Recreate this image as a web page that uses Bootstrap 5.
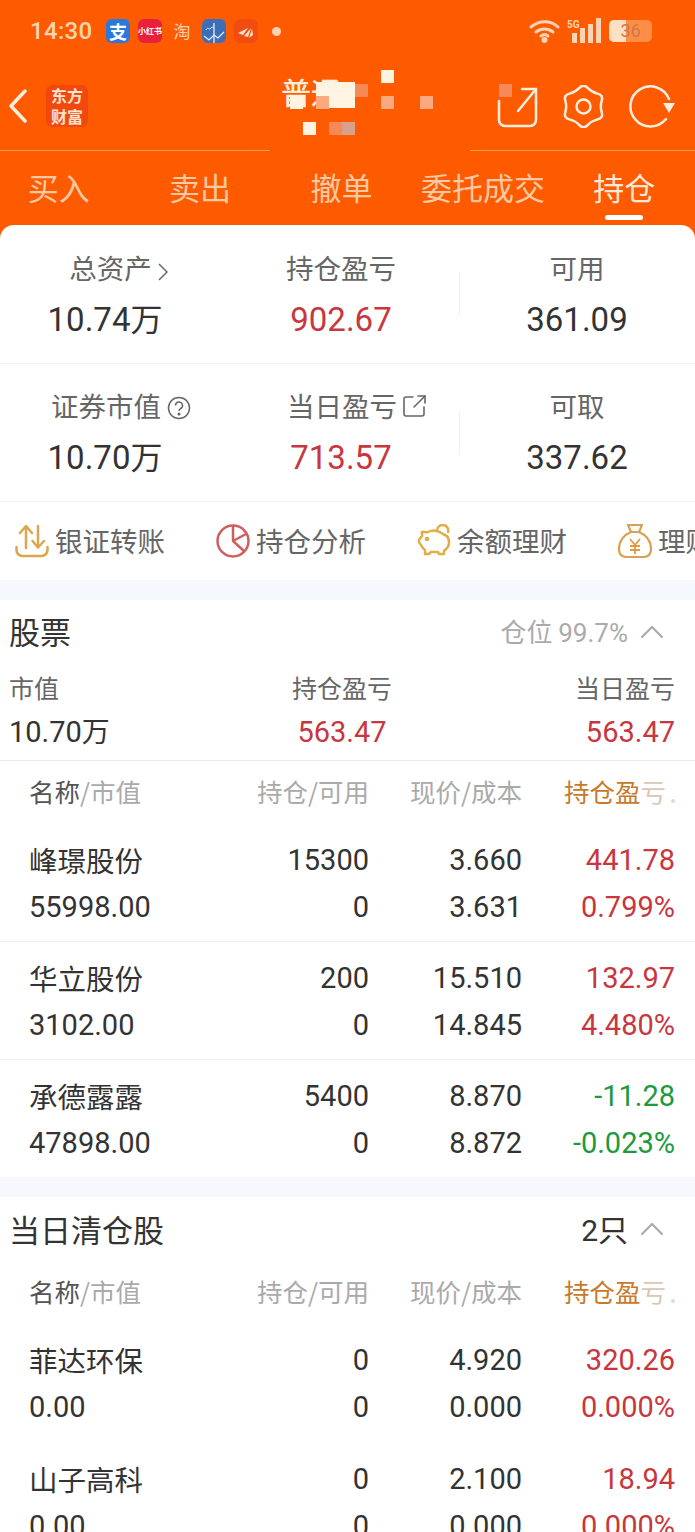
<!DOCTYPE html>
<html lang="zh-CN">
<head>
  <meta charset="UTF-8">
  <meta name="viewport" content="width=device-width, initial-scale=1.0">
  <title>持仓</title>
  <link href="https://cdn.jsdelivr.net/npm/bootstrap@5.3.0/dist/css/bootstrap.min.css" rel="stylesheet">
  <style>
    html, body { height: 1532px; overflow: hidden; }
    body { font-family: Roboto, "Noto Sans CJK SC", sans-serif; background: #fff; color: #333; }
    .cn { font-family: "Noto Sans CJK SC", sans-serif; }
    .rb { font-family: Roboto, sans-serif; }
    .top-area { background: #fe5b00; height: 240px; position: relative; }
    .status-bar { height: 62px; padding: 0 0 0 30px; color: #fcd4b4; }
    .clock { font-size: 24px; font-weight: 500; width: 76px; letter-spacing: .3px; }
    .app-ico { width: 24px; height: 24px; border-radius: 6px; margin-right: 8px; color: #fff; line-height: 24px; text-align: center; flex-shrink: 0; overflow: hidden; }
    .app-zfb { background: #2a78dc; font-size: 18px; font-weight: 700; }
    .app-xhs { background: #e8203c; font-size: 8px; font-weight: 700; }
    .app-tb { color: #fcd4b4; font-size: 17px; }
    .app-chart { background: #3c6fb8; }
    .app-plane { background: #f24c10; }
    .dot-ico { width: 9px; height: 9px; border-radius: 50%; background: #fcd4b4; margin-left: 6px; }
    .batt { width: 43px; height: 22px; border-radius: 5px; font-size: 18px; line-height: 22px; text-align: center; color: #c97a4a; background: linear-gradient(90deg, #fde0c4 0 40%, #ff8d45 40% 100%); }
    .title-bar { height: 88px; }
    .logo-box { width: 42px; height: 42px; background: #f2480f; border-radius: 6px; color: #fde3cd; font-size: 16px; font-weight: 700; line-height: 21px; text-align: center; margin-left: 18px; }
    .title-txt { position: absolute; left: 281px; top: 71px; font-size: 30px; color: #fdeedd; line-height: 40px; font-weight: 500; }
    .mos { position: absolute; width: 13px; height: 13px; }
    .mos-a { background: #fff3e2; }
    .mos-b { background: #fbaa80; }
    .mos-c { background: #f58a58; }
    .mos-d { background: #d8a18c; }
    .mos-wide { width: 39px; height: 26px; }
    .hair-line { height: 1px; }
    .hair-line span { display: block; height: 1px; background: #fb9c4e; }
    .tab-row { height: 75px; margin-left: -12px; width: 707px; }
    .tab-cell { flex: 1 1 0; text-align: center; font-size: 31px; line-height: 72px; height: 75px; color: #fcc9a2; position: relative; white-space: nowrap; }
    .tab-on { color: #fde9d8; }
    .tab-on::after { content: ""; position: absolute; left: 50%; margin-left: -19px; bottom: 6px; width: 38px; height: 5px; background: #fff; border-radius: 3px; }
    .sheet { background: #fff; border-radius: 14px 14px 0 0; margin-top: -15px; position: relative; }
    .sum-row { display: grid; grid-template-columns: 210px 262px 210px; height: 138px; border-bottom: 1px solid #f2f2f2; text-align: center; position: relative; }
    .sum-first { height: 139px; }
    .sum-row::after { content: ""; position: absolute; left: 459px; top: 47px; width: 1px; height: 44px; background: #f0f0f0; }
    .sum-label { font-size: 27.5px; color: #666; line-height: 36px; margin-top: 24px; white-space: nowrap; }
    .sum-row + .sum-row .sum-label { margin-top: 23px; }
    .sum-pad-a { padding-left: 27px; }
    .sum-pad-b { padding-left: 32px; }
    .sum-val { font-size: 33px; line-height: 44px; margin-top: 13px; color: #333; white-space: nowrap; }
    .sum-val.sum-up, .sg-val.sum-up { color: #c8363e; }
    .cn-unit { font-family: "Noto Sans CJK SC", sans-serif; font-size: 32px; line-height: 0; }
    .short-row { height: 78px; overflow: hidden; }
    .short-item { width: 201px; flex-shrink: 0; padding-left: 15px; font-size: 27.5px; color: #666; white-space: nowrap; gap: 6px; }
    .gap-band { height: 20px; background: #f5f8fc; }
    .sec-head { height: 63px; padding: 0 31px 0 9px; }
    .sec-head-b { height: 64px; }
    .sec-title { font-size: 31px; color: #333; }
    .sec-side { font-size: 26px; color: #aaa; }
    .sec-count { font-size: 30px; color: #333; margin-right: 12px; }
    .sum-grid { display: grid; grid-template-columns: 1fr 1fr 1fr; height: 98px; padding: 4px 20px 0 9px; border-bottom: 1px solid #ececec; }
    .sg-label { font-size: 25px; line-height: 40px; color: #666; }
    .sg-val { font-size: 29px; line-height: 44px; margin-top: 3px; color: #333; }
    .sg-val .cn { font-size: 28px; line-height: 0; }
    .pos-grid { display: grid; grid-template-columns: 189px 151px 153px 153px; padding-left: 29px; text-align: right; }
    .pos-grid > div:first-child { text-align: left; }
    .pos-head { height: 61px; align-items: center; font-size: 25.5px; color: #aaa; white-space: nowrap; }
    .pos-head-b { height: 60px; }
    .name-part { color: #555; }
    .fade-1 { color: #c87a2c; }
    .fade-2 { color: #d9c8b4; }
    .fade-dot { display: inline-block; width: 4px; height: 4px; border-radius: 50%; background: #e4d8cc; margin-left: 5px; vertical-align: -1px; }
    .pos-row { height: 118px; padding-top: 13px; font-size: 29px; line-height: 47px; border-bottom: 1px solid #efefef; color: #333; }
    .pos-row-top { height: 120px; padding-top: 15px; }
    .pos-row-end { height: 117px; border-bottom: 0; }
    .pos-row-plain { border-bottom: 0; }
    .pos-row-lead { height: 122px; padding-top: 16px; }
    .stk-name { display: block; font-size: 28.5px; line-height: 45px; height: 47px; font-family: "Noto Sans CJK SC", sans-serif; }
    .num-up { color: #c8363e; }
    .num-down { color: #1c9a3e; }
  </style>
</head>
<body>
  <div class="top-area cn">
    <div class="status-bar d-flex align-items-center">
      <div class="clock rb">14:30</div>
      <div class="app-ico app-zfb">支</div>
      <div class="app-ico app-xhs">小红书</div>
      <div class="app-ico app-tb">淘</div>
      <div class="app-ico app-chart">
        <svg width="24" height="24" viewBox="0 0 24 24" fill="none" stroke="#e4eefa" stroke-width="1.3"><path d="M2 14l5 4 5-5 4 3 6-6"/><path d="M12 1v22"/><path d="M4 8c2-4 3 1 5-2s2 1 3 0" stroke-width="1"/></svg>
      </div>
      <div class="app-ico app-plane">
        <svg width="24" height="24" viewBox="0 0 24 24" fill="#fde3cd"><path d="M4 11l10-5-5 7z"/><path d="M10 14l7-8-3 9z"/><path d="M15 16l3-9 1 6z"/></svg>
      </div>
      <div class="dot-ico"></div>
      <div class="ms-auto d-flex align-items-center" style="padding-right: 43px">
        <svg width="34" height="26" viewBox="0 0 34 26" fill="none" stroke="#fcd4b4" stroke-width="3" stroke-linecap="round"><path d="M2 9c8-7 20-7 27 0"/><path d="M7 14c5-4 12-4 17 0"/><path d="M12 18c3-2 5-2 7 0"/><circle cx="15.500" cy="22" r="1.500" fill="#fcd4b4"/></svg>
        <svg class="ms-1" width="34" height="26" viewBox="0 0 34 26" fill="#fcd4b4"><rect x="5" y="15" width="5" height="10"/><rect x="13" y="10" width="5" height="15"/><rect x="21" y="6" width="5" height="19"/><rect x="29" y="0" width="5" height="25"/><text x="0" y="10" font-size="10" font-weight="700" font-family="Roboto, sans-serif">5G</text></svg>
        <div class="batt ms-2 rb">36</div>
      </div>
    </div>

    <div class="title-bar d-flex align-items-center">
      <svg class="ms-2" width="20" height="34" viewBox="0 0 20 34" fill="none" stroke="#fdeedd" stroke-width="3.500" stroke-linecap="round" stroke-linejoin="round"><path d="M17 2L3 17l14 15"/></svg>
      <div class="logo-box">东方<br>财富</div>
      <div class="ms-auto d-flex align-items-center" style="padding-right: 19px; gap: 23px">
        <svg width="41" height="43" viewBox="0 0 41 43" fill="none" stroke="#fdeedd" stroke-width="2.500" stroke-linecap="round" stroke-linejoin="round"><path d="M2 16v19a6 6 0 0 0 6 6h25a6 6 0 0 0 6-6V17"/><path d="M21 26L39 4"/><path d="M25 4h14v14"/></svg>
        <svg width="45" height="43" viewBox="0 0 45 43" fill="none" stroke="#fdeedd" stroke-width="2.500"><path d="M26.600 2.850Q30.750 7.200 36.600 8.600Q42.400 10 40.700 15.750Q39 21.500 40.700 27.250Q42.400 33 36.600 34.400Q30.750 35.800 26.600 40.150Q22.500 44.500 18.400 40.150Q14.250 35.800 8.400 34.400Q2.600 33 4.300 27.250Q6 21.500 4.300 15.750Q2.600 10 8.400 8.600Q14.250 7.200 18.400 2.850Q22.500 -1.500 26.600 2.850z"/><circle cx="22.500" cy="21.500" r="7"/></svg>
        <svg width="47" height="43" viewBox="0 0 47 43" fill="none" stroke="#fdeedd" stroke-width="2.500" stroke-linecap="round"><path d="M37 34A20 20 0 1 1 40 14"/><path d="M34 18h12l-6 10z" fill="#fdeedd" stroke="none"/></svg>
      </div>
    </div>

    <div class="title-txt">普通</div>
    <div class="mos mos-a" style="left: 290px; top: 96px"></div>
    <div class="mos mos-a mos-wide" style="left: 316px; top: 82px"></div>
    <div class="mos mos-b" style="left: 316px; top: 96px"></div>
    <div class="mos mos-c" style="left: 355px; top: 84px"></div>
    <div class="mos mos-a" style="left: 381px; top: 70px"></div>
    <div class="mos mos-b" style="left: 381px; top: 96px"></div>
    <div class="mos mos-b" style="left: 420px; top: 96px"></div>
    <div class="mos mos-a" style="left: 303px; top: 122px"></div>
    <div class="mos mos-c" style="left: 329px; top: 122px"></div>
    <div class="mos mos-d" style="left: 342px; top: 122px"></div>
    <div class="mos mos-c" style="left: 499px; top: 84px"></div>

    <div class="hair-line d-flex justify-content-between">
      <span style="width: 270px"></span>
      <span style="width: 225px"></span>
    </div>
    <div class="tab-row d-flex">
      <div class="tab-cell">买入</div>
      <div class="tab-cell">卖出</div>
      <div class="tab-cell">撤单</div>
      <div class="tab-cell">委托成交</div>
      <div class="tab-cell tab-on">持仓</div>
    </div>
  </div>

  <div class="sheet">
    <div class="sum-row sum-first">
      <div>
        <div class="sum-label cn sum-pad-a">总资产 <svg width="10" height="18" viewBox="0 0 10 18" fill="none" stroke="#666" stroke-width="1.500"><path d="M1 1l8 8-8 8"/></svg></div>
        <div class="sum-val">10.74<span class="cn-unit">万</span></div>
      </div>
      <div>
        <div class="sum-label cn">持仓盈亏</div>
        <div class="sum-val sum-up">902.67</div>
      </div>
      <div>
        <div class="sum-label cn">可用</div>
        <div class="sum-val">361.09</div>
      </div>
    </div>
    <div class="sum-row">
      <div>
        <div class="sum-label cn sum-pad-b">证券市值 <svg width="24" height="24" viewBox="0 0 24 24" fill="none" stroke="#666" stroke-width="1.500" style="vertical-align: -3px"><circle cx="12" cy="12" r="10.500"/><path d="M8.500 9.500a3.500 3.500 0 1 1 5.200 3c-1.200.7-1.700 1.300-1.700 2.500"/><circle cx="12" cy="18" r=".8" fill="#666"/></svg></div>
        <div class="sum-val">10.70<span class="cn-unit">万</span></div>
      </div>
      <div>
        <div class="sum-label cn sum-pad-b">当日盈亏 <svg width="24" height="24" viewBox="0 0 24 24" fill="none" stroke="#666" stroke-width="1.600" stroke-linecap="round" style="vertical-align: -1px"><path d="M10 3H3a2 2 0 0 0-2 2v15a2 2 0 0 0 2 2h16a2 2 0 0 0 2-2v-7"/><path d="M11 13L22 2"/><path d="M15 2h7v7"/></svg></div>
        <div class="sum-val sum-up">713.57</div>
      </div>
      <div>
        <div class="sum-label cn">可取</div>
        <div class="sum-val">337.62</div>
      </div>
    </div>

    <div class="short-row d-flex align-items-center cn">
      <div class="short-item d-flex align-items-center">
        <svg width="34" height="34" viewBox="0 0 34 34" fill="none" stroke="#dca64e" stroke-width="2.500" stroke-linecap="round" stroke-linejoin="round"><path d="M1.500 23v3a6 6 0 0 0 6 6h19a6 6 0 0 0 6-6v-3"/><path d="M11 24V3"/><path d="M5 9l6-7 6 7"/><path d="M23 2v21"/><path d="M17.500 17l5.500 6.500 6-6.500"/></svg>
        <span>银证转账</span>
      </div>
      <div class="short-item d-flex align-items-center">
        <svg width="34" height="34" viewBox="0 0 34 34" fill="none" stroke="#cf5f5f" stroke-width="2.500" stroke-linejoin="round"><circle cx="17" cy="17" r="15.500"/><path d="M17 2v15l11 10"/><path d="M17 17l13-7"/></svg>
        <span>持仓分析</span>
      </div>
      <div class="short-item d-flex align-items-center">
        <svg width="34" height="34" viewBox="0 0 34 34" fill="none" stroke="#dfae45" stroke-width="2.500" stroke-linejoin="round"><path d="M2 17c0-3 2-3 3-5s-1-3 0-4 4 1 6 0 5-2 9-1 5 3 8 4 4 4 4 8-3 6-5 8v3h-5l-1-2h-7l-2 2H8v-4c-2-1-3-3-4-5s-2-1-2-4z"/><path d="M20 7c0-3 2-6 6-6s6 4 5 8"/><circle cx="10" cy="15" r="1" fill="#dfae45"/></svg>
        <span>余额理财</span>
      </div>
      <div class="short-item d-flex align-items-center">
        <svg width="34" height="34" viewBox="0 0 34 34" fill="none" stroke="#d8a255" stroke-width="2.200" stroke-linejoin="round"><path d="M10 1h14l-3 7h-8z"/><path d="M13 8C6 11 1 17 1 25c0 6 4 8 8 8h16c4 0 8-2 8-8 0-8-5-14-12-17"/><path d="M12 15l5 6 5-6M12 22h10M12 26h10M17 21v9" stroke="#e09a3a" stroke-width="1.800"/></svg>
        <span>理财产品</span>
      </div>
    </div>
    <div class="gap-band"></div>

    <div class="sec-head d-flex align-items-center justify-content-between cn">
      <div class="sec-title">股票</div>
      <div class="sec-side d-flex align-items-center">
        <span style="margin-right: 12px">仓位 <span class="rb">99.7%</span></span>
        <svg width="24" height="14" viewBox="0 0 24 14" fill="none" stroke="#aaa" stroke-width="2.200" stroke-linecap="round" stroke-linejoin="round"><path d="M2 12L12 2l10 10"/></svg>
      </div>
    </div>
    <div class="sum-grid">
      <div>
        <div class="sg-label cn">市值</div>
        <div class="sg-val">10.70<span class="cn">万</span></div>
      </div>
      <div class="text-center">
        <div class="sg-label cn">持仓盈亏</div>
        <div class="sg-val sum-up">563.47</div>
      </div>
      <div class="text-end">
        <div class="sg-label cn">当日盈亏</div>
        <div class="sg-val sum-up">563.47</div>
      </div>
    </div>

    <div class="pos-grid pos-head cn">
      <div><span class="name-part">名称</span>/市值</div>
      <div>持仓/可用</div>
      <div>现价/成本</div>
      <div><span class="fade-1">持仓盈</span><span class="fade-2">亏</span><span class="fade-dot"></span></div>
    </div>
    <div class="pos-grid pos-row pos-row-top">
      <div><span class="stk-name">峰璟股份</span>55998.00</div>
      <div>15300<br>0</div>
      <div>3.660<br>3.631</div>
      <div class="num-up">441.78<br>0.799%</div>
    </div>
    <div class="pos-grid pos-row">
      <div><span class="stk-name">华立股份</span>3102.00</div>
      <div>200<br>0</div>
      <div>15.510<br>14.845</div>
      <div class="num-up">132.97<br>4.480%</div>
    </div>
    <div class="pos-grid pos-row pos-row-end">
      <div><span class="stk-name">承德露露</span>47898.00</div>
      <div>5400<br>0</div>
      <div>8.870<br>8.872</div>
      <div class="num-down">-11.28<br>-0.023%</div>
    </div>
    <div class="gap-band"></div>

    <div class="sec-head sec-head-b d-flex align-items-center justify-content-between cn">
      <div class="sec-title">当日清仓股</div>
      <div class="d-flex align-items-center">
        <span class="sec-count"><span class="rb">2</span>只</span>
        <svg width="24" height="14" viewBox="0 0 24 14" fill="none" stroke="#aaa" stroke-width="2.200" stroke-linecap="round" stroke-linejoin="round"><path d="M2 12L12 2l10 10"/></svg>
      </div>
    </div>
    <div class="pos-grid pos-head pos-head-b cn">
      <div><span class="name-part">名称</span>/市值</div>
      <div>持仓/可用</div>
      <div>现价/成本</div>
      <div><span class="fade-1">持仓盈</span><span class="fade-2">亏</span><span class="fade-dot"></span></div>
    </div>
    <div class="pos-grid pos-row pos-row-plain pos-row-lead">
      <div><span class="stk-name">菲达环保</span>0.00</div>
      <div>0<br>0</div>
      <div>4.920<br>0.000</div>
      <div class="num-up">320.26<br>0.000%</div>
    </div>
    <div class="pos-grid pos-row pos-row-plain">
      <div><span class="stk-name">山子高科</span>0.00</div>
      <div>0<br>0</div>
      <div>2.100<br>0.000</div>
      <div class="num-up">18.94<br>0.000%</div>
    </div>
  </div>
  <script src="https://cdn.jsdelivr.net/npm/bootstrap@5.3.0/dist/js/bootstrap.bundle.min.js"></script>
</body>
</html>
